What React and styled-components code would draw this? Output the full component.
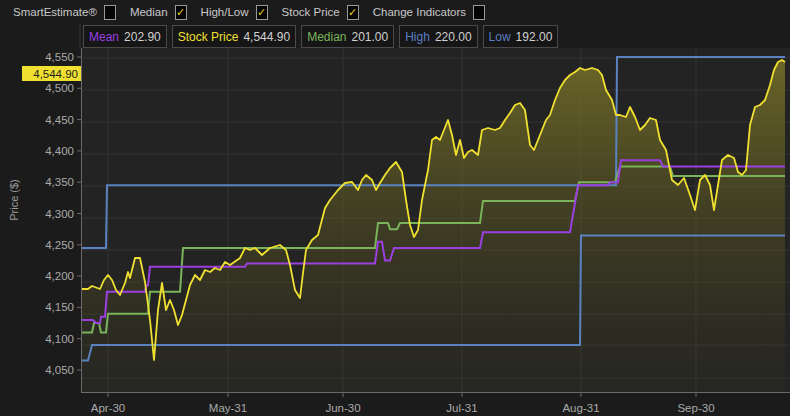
import styled, { createGlobalStyle } from "styled-components";

const Global = createGlobalStyle`
  body { margin: 0; background: #1b1b1b; font-family: "Liberation Sans", Arial, sans-serif; }
`;

const Page = styled.div`
  width: 790px;
  height: 416px;
  overflow: hidden;
  background: #1b1b1b;
`;

const Toolbar = styled.div`
  display: flex;
  align-items: center;
  height: 24px;
  padding-left: 13px;
  gap: 14px;
  color: #c8c8c8;
  font-size: 11.5px;
`;

const Option = styled.label`
  display: flex;
  align-items: center;
  gap: 7px;
`;

const Box = styled.span`
  width: 10px;
  height: 13px;
  border: 1px solid #9a9a9a;
  background: #050505;
  color: #e8d31c;
  font-size: 11px;
  line-height: 13px;
  text-align: center;
`;

const ChartWrap = styled.div`
  position: relative;
  height: 392px;
`;

const Legend = styled.div`
  position: absolute;
  left: 83px;
  top: 1px;
  display: flex;
  gap: 5px;
`;

const Chip = styled.div`
  display: flex;
  gap: 5px;
  align-items: center;
  height: 21px;
  padding: 0 5px;
  border: 1px solid #4a4a4a;
  background: #161616;
  font-size: 12px;
  color: #d0d0d0;
  span { color: ${(p) => p.$c}; }
`;

const C = { mean: "#9b3fe0", price: "#f0e030", median: "#79b35a", high: "#5a82c0", low: "#5a82c0" };

const Y = (v) => 370 - (v - 4050) * 0.626;
const steps = (arr) => arr.map(([x, v]) => `${x},${Y(v)}`).join(" ");

const high = [[81, 4245], [106, 4245], [107, 4345], [616, 4345], [617, 4550], [785, 4550]];
const low = [[81, 4065], [88, 4065], [92, 4090], [580, 4090], [581, 4265], [785, 4265]];
const mean = [[81, 4130], [93, 4130], [96, 4125], [100, 4125], [101, 4135], [105, 4135], [107, 4175], [145, 4175], [146, 4185], [148, 4185], [150, 4215], [245, 4215], [247, 4220], [375, 4220], [378, 4255], [382, 4255], [385, 4225], [390, 4225], [394, 4245], [480, 4245], [483, 4270], [570, 4270], [578, 4345], [608, 4345], [610, 4350], [618, 4350], [621, 4385], [660, 4385], [663, 4375], [785, 4375]];
const median = [[81, 4110], [92, 4110], [94, 4125], [99, 4125], [101, 4110], [106, 4110], [108, 4140], [148, 4140], [150, 4175], [180, 4175], [183, 4245], [375, 4245], [378, 4285], [388, 4285], [390, 4275], [397, 4275], [400, 4285], [480, 4285], [483, 4320], [575, 4320], [579, 4350], [615, 4350], [620, 4375], [670, 4375], [673, 4360], [785, 4360]];

const price = "81,289 88,289 92,286 100,289 104,280 108,275 112,280 116,290 120,295 125,283 128,272 130,278 135,258 140,258 145,282 150,320 154,360 158,310 162,283 166,310 170,300 174,310 178,325 182,315 186,300 190,285 195,275 200,280 205,270 210,272 215,268 220,270 225,262 230,265 240,258 245,248 250,250 255,248 262,255 270,248 280,245 286,250 290,265 295,290 300,298 303,273 306,250 312,240 318,235 325,208 330,200 338,190 345,183 352,182 358,190 362,180 366,175 372,180 376,190 380,183 385,175 390,168 396,162 402,172 406,200 410,225 414,237 418,230 422,200 428,170 432,140 436,137 440,140 444,130 448,120 452,135 456,155 460,140 464,158 468,152 472,150 478,155 482,130 488,128 495,130 500,128 505,120 510,113 515,105 520,103 525,110 530,145 534,150 538,140 542,130 546,120 550,115 555,100 560,88 565,80 570,75 575,72 580,68 585,70 592,68 598,70 602,75 606,90 612,100 616,115 620,115 626,117 630,107 635,117 640,130 645,125 650,118 656,120 660,140 666,150 672,180 678,185 684,178 690,195 695,210 700,180 705,175 710,185 714,210 718,185 722,160 728,155 734,158 738,172 742,175 746,170 750,125 755,107 760,105 765,100 770,85 774,70 778,62 782,60 785,62";

const yLabels = [4550, 4500, 4450, 4400, 4350, 4300, 4250, 4200, 4150, 4100, 4050];
const xLabels = [[108, "Apr-30"], [228, "May-31"], [343, "Jun-30"], [462, "Jul-31"], [581, "Aug-31"], [696, "Sep-30"]];
const gridY = [58, 90, 122, 154, 186, 218, 250, 282, 314, 345, 378];

const Chart = () => (
  <svg width="790" height="392" viewBox="0 24 790 392" style={{ display: "block" }}>
    <defs>
      <linearGradient id="fill" x1="0" y1="0" x2="0" y2="1">
        <stop offset="0" stopColor="#7d7628" stopOpacity="0.8" />
        <stop offset="1" stopColor="#3a381e" stopOpacity="0.15" />
      </linearGradient>
    </defs>
    <rect x="81" y="48" width="709" height="344" fill="#232323" />
    <line x1="80" y1="24" x2="80" y2="48" stroke="#333" />
    {gridY.map((y) => <line key={y} x1="81" x2="790" y1={y} y2={y} stroke="#353535" />)}
    {xLabels.map(([x]) => <line key={x} x1={x} x2={x} y1="48" y2="392" stroke="#353535" />)}
    <polygon points={`81,392 ${price} 785,392`} fill="url(#fill)" />
    <polyline points={steps(low)} fill="none" stroke={C.low} strokeWidth="2" />
    <polyline points={steps(high)} fill="none" stroke={C.high} strokeWidth="2" />
    <polyline points={steps(median)} fill="none" stroke={C.median} strokeWidth="2" />
    <polyline points={steps(mean)} fill="none" stroke={C.mean} strokeWidth="2" />
    <polyline points={price} fill="none" stroke={C.price} strokeWidth="1.8" strokeLinejoin="round" />
    <line x1="81.5" y1="48" x2="81.5" y2="392" stroke="#6a6a6a" />
    <line x1="81" y1="392.5" x2="790" y2="392.5" stroke="#6a6a6a" />
    {yLabels.map((v) => (
      <g key={v}>
        <line x1="77" x2="81" y1={Y(v)} y2={Y(v)} stroke="#6a6a6a" />
        <text x="74" y={Y(v) + 4} fill="#aaa" fontSize="11.5" textAnchor="end" fontFamily="Liberation Sans, Arial, sans-serif">
          {v.toLocaleString("en-US")}
        </text>
      </g>
    ))}
    {xLabels.map(([x, t]) => (
      <g key={t}>
        <line x1={x} x2={x} y1="392" y2="397" stroke="#6a6a6a" />
        <text x={x} y="412" fill="#aaa" fontSize="11.5" textAnchor="middle" fontFamily="Liberation Sans, Arial, sans-serif">{t}</text>
      </g>
    ))}
    <text transform="translate(18 200) rotate(-90)" fill="#999" fontSize="11" textAnchor="middle" fontFamily="Liberation Sans, Arial, sans-serif">Price ($)</text>
    <rect x="22" y="66" width="59" height="15" fill="#f0e030" />
    <text x="78" y="78" fill="#222" fontSize="11.5" textAnchor="end" fontFamily="Liberation Sans, Arial, sans-serif">4,544.90</text>
  </svg>
);

const opts = [["SmartEstimate®", false], ["Median", true], ["High/Low", true], ["Stock Price", true], ["Change Indicators", false]];
const chips = [["Mean", "202.90", C.mean], ["Stock Price", "4,544.90", C.price], ["Median", "201.00", C.median], ["High", "220.00", "#5b7fc4"], ["Low", "192.00", "#5b7fc4"]];

export default function App() {
  return (
    <Page>
      <Global />
      <Toolbar>
        {opts.map(([t, on]) => (
          <Option key={t}>{t}<Box>{on ? "✓" : ""}</Box></Option>
        ))}
      </Toolbar>
      <ChartWrap>
        <Chart />
        <Legend>
          {chips.map(([n, v, c]) => (
            <Chip key={n} $c={c}><span>{n}</span>{v}</Chip>
          ))}
        </Legend>
      </ChartWrap>
    </Page>
  );
}
